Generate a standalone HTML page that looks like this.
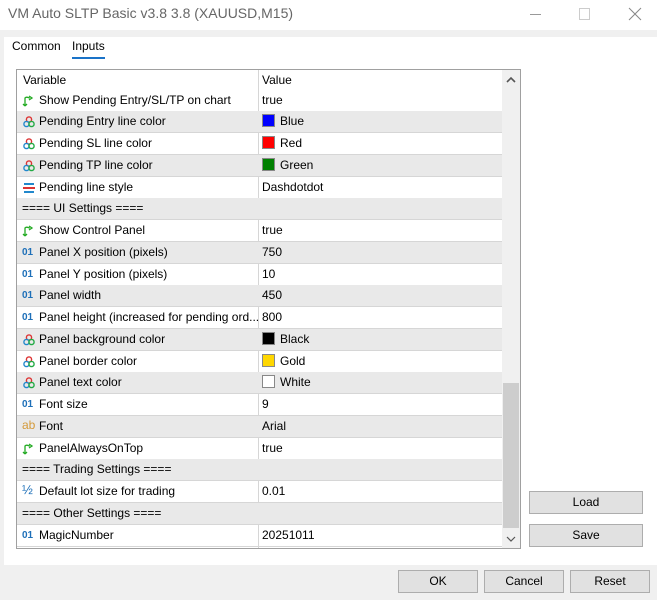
<!DOCTYPE html><html><head><style>
*{margin:0;padding:0;box-sizing:border-box}
body{width:657px;height:600px;background:#f0f0f0;font-family:"Segoe UI","Liberation Sans",sans-serif;font-size:12px;color:#000;position:relative;overflow:hidden}
.a{position:absolute}
.title{left:0;top:0;width:657px;height:30px;background:#fff;font-size:14px;color:#666}
.panel{left:4px;top:37px;width:653px;height:528px;background:#fff}
.tbl{left:16px;top:69px;width:505px;height:480px;border:1px solid #a0a0a0;background:#fff;overflow:hidden}
.row{position:absolute;left:0;width:485px;height:22px;border-bottom:1px solid #d6d6d6;line-height:21px}
.g{background:#e9e9e9}
.c1{position:absolute;left:22px;white-space:nowrap}
.c2{position:absolute;left:245px}
.sec .c1{left:5px}
.ic{position:absolute;left:5px;top:4px;width:14px;height:14px;font-size:10px;line-height:14px}
.sw{display:inline-block;width:13px;height:13px;vertical-align:-2px;margin-right:5px;border:1px solid #888}
.btn{background:#e1e1e1;border:1px solid #adadad;text-align:center;line-height:21px;font-size:12px}
</style></head><body>
<div class="a title"><span class="a" style="left:8px;top:5px">VM Auto SLTP Basic v3.8 3.8 (XAUUSD,M15)</span>
<div class="a" style="left:530px;top:14px;width:11px;height:1px;background:#999"></div>
<div class="a" style="left:579px;top:8px;width:11px;height:12px;border:1px solid #ccc"></div>
<svg class="a" style="left:628px;top:7px" width="14" height="14"><path d="M1 1L13 13M13 1L1 13" stroke="#888" stroke-width="1"/></svg>
</div>
<div class="a panel"></div>
<span class="a" style="left:12px;top:39px">Common</span>
<span class="a" style="left:72px;top:39px">Inputs</span>
<div class="a" style="left:72px;top:57px;width:33px;height:2px;background:#1a73c8"></div>
<div class="a tbl">
<div class="row" style="top:0;height:20px;border:0"><span class="c1" style="left:6px">Variable</span><span class="c2">Value</span></div>
<div class="a" style="left:241px;top:0;width:1px;height:480px;background:#d6d6d6"></div>
<div id="rows"></div>
<div class="a" style="left:485px;top:0;width:18px;height:480px;background:#f0f0f0"></div>
<div class="a" style="left:486px;top:313px;width:16px;height:145px;background:#cdcdcd"></div>
<svg class="a" style="left:488px;top:6px" width="12" height="8"><path d="M2 6L6 2L10 6" stroke="#555" stroke-width="1.6" fill="none"/></svg>
<svg class="a" style="left:488px;top:465px" width="12" height="8"><path d="M2 2L6 6L10 2" stroke="#555" stroke-width="1.2" fill="none"/></svg>
</div>
<div class="a btn" style="left:529px;top:491px;width:114px;height:23px">Load</div>
<div class="a btn" style="left:529px;top:524px;width:114px;height:23px">Save</div>
<div class="a btn" style="left:398px;top:570px;width:80px;height:23px">OK</div>
<div class="a btn" style="left:484px;top:570px;width:80px;height:23px">Cancel</div>
<div class="a btn" style="left:570px;top:570px;width:80px;height:23px">Reset</div>
<script>
var B='<svg class="ic" viewBox="0 0 14 14"><path d="M3 12V4c2-2 3 0 5 0" stroke="#2a2" stroke-width="1.3" fill="none"/><path d="M7 2l3 2-3 2M3 12l-2-2M3 12l2-2" stroke="#2a2" stroke-width="1.3" fill="none"/></svg>';
var C='<svg class="ic" viewBox="0 0 14 14"><circle cx="7" cy="4.5" r="2.6" stroke="#d33" fill="none" stroke-width="1.4"/><circle cx="4.5" cy="9" r="2.6" stroke="#28c" fill="none" stroke-width="1.4"/><circle cx="9.5" cy="9" r="2.6" stroke="#2a4" fill="none" stroke-width="1.4"/></svg>';
var L='<svg class="ic" viewBox="0 0 14 14"><rect x="2" y="2" width="10" height="2" fill="#28c"/><rect x="1" y="6" width="12" height="2" fill="#d33"/><rect x="2" y="10" width="10" height="2" fill="#28c"/></svg>';
var N='<span class="ic" style="color:#1d6fb8;font-weight:bold;font-size:10px">01</span>';
var A='<span class="ic" style="color:#d49a3a;font-size:12px;top:2px">ab</span>';
var H='<span class="ic" style="color:#1d6fb8;font-size:13px;top:2px">½</span>';
function sw(c){return '<span class="sw" style="background:'+c+'"></span>'}
var r=[[B,'Show Pending Entry/SL/TP on chart','true'],[C,'Pending Entry line color',sw('#00f')+'Blue'],[C,'Pending SL line color',sw('#f00')+'Red'],[C,'Pending TP line color',sw('#008000')+'Green'],[L,'Pending line style','Dashdotdot'],[null,'==== UI Settings ====',''],[B,'Show Control Panel','true'],[N,'Panel X position (pixels)','750'],[N,'Panel Y position (pixels)','10'],[N,'Panel width','450'],[N,'Panel height (increased for pending ord...','800'],[C,'Panel background color',sw('#000')+'Black'],[C,'Panel border color',sw('#ffd700')+'Gold'],[C,'Panel text color',sw('#fff')+'White'],[N,'Font size','9'],[A,'Font','Arial'],[B,'PanelAlwaysOnTop','true'],[null,'==== Trading Settings ====',''],[H,'Default lot size for trading','0.01'],[null,'==== Other Settings ====',''],[N,'MagicNumber','20251011']];
var h='';r.forEach(function(x,i){var t=19.5+i*21.75;h+='<div class="row'+(i%2?' g':'')+(x[0]?'':' sec')+'" style="top:'+t+'px">'+(x[0]||'')+'<span class="c1">'+x[1]+'</span><span class="c2">'+x[2]+'</span></div>'});
document.getElementById('rows').innerHTML=h;
</script>
</body></html>
